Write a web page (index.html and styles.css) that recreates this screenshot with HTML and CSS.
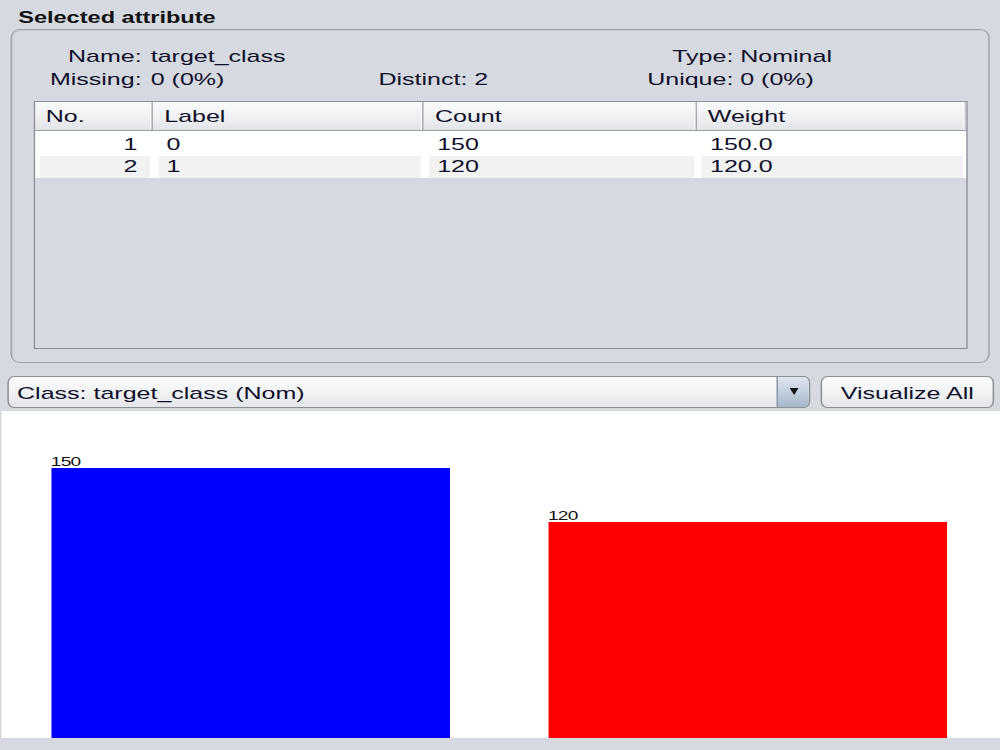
FILE: index.html
```html
<!DOCTYPE html>
<html lang="en">
<head>
<meta charset="utf-8">
<title>Preprocess – Selected attribute</title>
<link rel="stylesheet" href="styles.css">
</head>
<body>
<div class="stage">
  <div class="title">Selected attribute</div>

  <div class="group">
    <div class="stats">
      <span class="lab">Name:</span><span class="val">target_class</span><span class="mid"></span><span class="lab">Type:</span><span class="val2">Nominal</span>
      <span class="lab">Missing:</span><span class="val">0 (0%)</span><span class="mid">Distinct: 2</span><span class="lab">Unique:</span><span class="val2">0 (0%)</span>
    </div>

    <div class="table">
      <div class="thead">
        <div class="th">No.</div>
        <div class="th">Label</div>
        <div class="th">Count</div>
        <div class="th last">Weight</div>
      </div>
      <div class="tbody">
        <div class="tr">
          <div class="td num">1</div><div class="td">0</div><div class="td">150</div><div class="td">150.0</div>
        </div>
        <div class="tr alt">
          <div class="td num">2</div><div class="td">1</div><div class="td">120</div><div class="td">120.0</div>
        </div>
      </div>
      <div class="viewport"></div>
    </div>
  </div>

  <div class="controls">
    <div class="combo">
      <span class="combo-text">Class: target_class (Nom)</span>
      <span class="combo-arrow"><span class="tri"></span></span>
    </div>
    <div class="button">Visualize All</div>
  </div>

  <div class="chart">
    <div class="bar-col">
      <span class="bar-label">150</span>
      <div class="bar blue" style="height:269.7px"></div>
    </div>
    <div class="bar-col">
      <span class="bar-label">120</span>
      <div class="bar red" style="height:216.3px"></div>
    </div>
  </div>
</div>
</body>
</html>
```

FILE: styles.css
```css
html, body {
  margin: 0;
  padding: 0;
  background: #d6d9e0;
  overflow: hidden;
}

body {
  width: 1000px;
  height: 750px;
  font-family: "Liberation Sans", Arial, sans-serif;
  font-size: 17px;
  color: #10102a;
}

/* The panel is laid out at its natural width and stretched to fill the window */
.stage {
  width: 680px;
  height: 750px;
  transform: scaleX(1.470588);
  transform-origin: 0 0;
}

.title {
  padding: 7px 0 0 12.4px;
  height: 21.3px;
  line-height: 21.3px;
  font-size: 16px;
  font-weight: bold;
  color: #111;
  white-space: nowrap;
}

/* Titled group box */
.group {
  margin: 1px 0 0 6.8px;
  width: 666.4px;
  box-sizing: border-box;
  height: 333.4px;
  border: 1px solid #9fa3aa;
  border-radius: 6px / 9px;
  box-shadow: inset 1px 1px 0 #c7cad1, -0.5px 0 0 #eceef1;
  padding: 16.1px 0 0 0;
}

.stats {
  display: grid;
  grid-template-columns: 88.5px 161.1px 1fr auto 173.5px;
  line-height: 22.5px;
  white-space: nowrap;
}

.lab { text-align: right; }
.val { padding-left: 6.2px; }
.val2 { padding-left: 4.7px; }

/* Attribute value table */
.table {
  margin: 9.6px 14.2px 0 14.85px;
  height: 248.3px;
  box-sizing: border-box;
  border: 1px solid #8c9097;
  display: flex;
  flex-direction: column;
}

.thead,
.tr {
  display: grid;
  grid-template-columns: 80.55px 184.1px 185.5px 1fr;
}

.thead {
  height: 29px;
  box-sizing: border-box;
  border-bottom: 1px solid #999da4;
  background: linear-gradient(#fbfbfc, #eef0f2 55%, #e2e4e8);
}

.th {
  padding: 2px 0 0 7.5px;
  line-height: 26px;
  border-right: 1px solid #a7abb1;
  box-shadow: inset -1px 0 0 #f7f8f9;
  white-space: nowrap;
}

.th.last {
  border-right: 1px solid #c3c6cc;
}

.tbody {
  background: #fff;
  padding-top: 3px;
}

.tr {
  height: 22px;
  line-height: 22px;
}

.td {
  margin: 0 2.2px 0 3.5px;
  padding: 0 0 0 5.5px;
  white-space: nowrap;
}

.td.num {
  text-align: right;
  padding: 0 8.6px 0 0;
}

.tr.alt .td {
  background: #f2f2f2;
}

.viewport {
  flex: 1;
  background: #d6d9e0;
}

/* Class selector and button row */
.controls {
  display: flex;
  gap: 6.6px;
  margin: 13.3px 0 0 4.6px;
  height: 32.3px;
}

.combo {
  width: 546.9px;
  box-sizing: border-box;
  border: 1px solid #8b8f96;
  border-radius: 4.5px / 7px;
  background: linear-gradient(#fcfcfd, #f1f2f4 50%, #e3e5e9);
  display: flex;
  overflow: hidden;
}

.combo-text {
  flex: 1;
  padding: 3px 0 0 6px;
  line-height: 27px;
  white-space: nowrap;
}

.combo-arrow {
  width: 21.8px;
  border-left: 1px solid #8796a8;
  background: linear-gradient(#dfe6ee, #c2cfdd 50%, #a6b6c9);
  display: flex;
  align-items: center;
  justify-content: center;
}

.tri {
  width: 0;
  height: 0;
  margin-top: -1px;
  border-left: 3.3px solid transparent;
  border-right: 3.3px solid transparent;
  border-top: 7px solid #111;
}

.button {
  width: 117.8px;
  box-sizing: border-box;
  border: 1px solid #8b8f96;
  border-radius: 4.5px / 7px;
  background: linear-gradient(#fcfcfd, #f1f2f4 50%, #e3e5e9);
  text-align: center;
  padding-top: 3px;
  line-height: 27px;
  white-space: nowrap;
}

/* Class distribution chart */
.chart {
  margin-top: 2.4px;
  height: 327.3px;
  box-sizing: border-box;
  background: #fff;
  border-left: 1px solid #d3d6dc;
  display: flex;
  align-items: flex-end;
  padding-left: 33.5px;
  gap: 67.1px;
}

.bar-col {
  width: 271px;
  display: flex;
  flex-direction: column;
}

.bar-label {
  font-size: 13px;
  line-height: 12px;
  letter-spacing: -0.5px;
  color: #111;
}

.bar.blue { background: #0000ff; }
.bar.red { background: #ff0000; }
```
